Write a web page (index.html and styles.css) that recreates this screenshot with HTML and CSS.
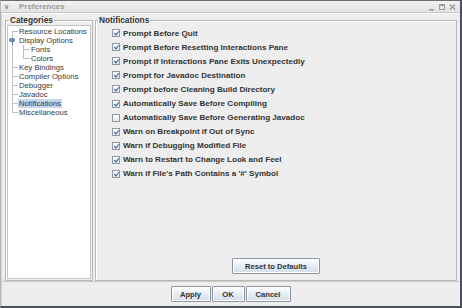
FILE: index.html
```html
<!DOCTYPE html>
<html>
<head>
<meta charset="utf-8">
<link rel="stylesheet" href="styles.css">
</head>
<body>
<div class="window">
  <div class="titlebar">
    <span class="tmenu">&#x2228;</span>
    <span class="ttitle">Preferences</span>
    <span class="tctrls">
      <svg width="30" height="8" viewBox="0 0 30 8">
        <rect x="1" y="6" width="5" height="1.5" fill="#9a9a9a"/>
        <rect x="11.5" y="1.5" width="5" height="5" fill="none" stroke="#9a9a9a" stroke-width="1"/>
        <rect x="11.5" y="1.5" width="5" height="1.5" fill="#9a9a9a"/>
        <path d="M22 1.5 L27 6.5 M27 1.5 L22 6.5" stroke="#9a9a9a" stroke-width="1.4"/>
      </svg>
    </span>
  </div>
  <div class="content">
    <div class="panels">
      <fieldset class="group cats">
        <legend>Categories</legend>
        <div class="tree">
          <div class="row top"><span class="stub"></span>Resource Locations</div>
          <div class="row"><span class="handle"></span>Display Options</div>
          <div class="row sub"><span class="stub"></span>Fonts</div>
          <div class="row sub last"><span class="stub"></span>Colors</div>
          <div class="row"><span class="stub"></span>Key Bindings</div>
          <div class="row"><span class="stub"></span>Compiler Options</div>
          <div class="row"><span class="stub"></span>Debugger</div>
          <div class="row"><span class="stub"></span>Javadoc</div>
          <div class="row"><span class="stub"></span><span class="sel">Notifications</span></div>
          <div class="row end"><span class="stub"></span>Miscellaneous</div>
        </div>
      </fieldset>
      <fieldset class="group notes">
        <legend>Notifications</legend>
        <div class="checks">
          <label class="chk"><span class="box on"></span>Prompt Before Quit</label>
          <label class="chk"><span class="box on"></span>Prompt Before Resetting Interactions Pane</label>
          <label class="chk"><span class="box on"></span>Prompt if Interactions Pane Exits Unexpectedly</label>
          <label class="chk"><span class="box on"></span>Prompt for Javadoc Destination</label>
          <label class="chk"><span class="box on"></span>Prompt before Cleaning Build Directory</label>
          <label class="chk"><span class="box on"></span>Automatically Save Before Compiling</label>
          <label class="chk"><span class="box"></span>Automatically Save Before Generating Javadoc</label>
          <label class="chk"><span class="box on"></span>Warn on Breakpoint if Out of Sync</label>
          <label class="chk"><span class="box on"></span>Warn if Debugging Modified File</label>
          <label class="chk"><span class="box on"></span>Warn to Restart to Change Look and Feel</label>
          <label class="chk"><span class="box on"></span>Warn if File's Path Contains a '#' Symbol</label>
        </div>
        <div class="resetrow"><button class="btn reset">Reset to Defaults</button></div>
      </fieldset>
    </div>
    <div class="buttons">
      <button class="btn apply">Apply</button>
      <button class="btn ok">OK</button>
      <button class="btn cancel">Cancel</button>
    </div>
  </div>
</div>
</body>
</html>
```
FILE: styles.css
```css
* { box-sizing: border-box; }
html, body { margin: 0; padding: 0; background: #eeeeee; }
body { width: 462px; height: 308px; overflow: hidden; font-family: "Liberation Sans", Arial, sans-serif; }
.window {
  width: 462px; height: 308px;
  display: flex; flex-direction: column;
  border-top: 1px solid #6b6b6b;
  border-right: 2px solid #4a4f5a;
  border-bottom: 2px solid #4a4f5a;
  border-left: 1px solid #b5b5b5;
  background: #eeeeee;
}
.titlebar {
  height: 12px;
  display: flex; align-items: center;
  background: linear-gradient(#f2f2f2, #e2e2e2);
  border-bottom: 1px solid #c8c8c8;
  color: #9a9a9a;
  font-size: 7.8px; font-weight: bold;
  padding: 0 2px 0 3px;
}
.tmenu { width: 15px; font-size: 7px; color: #8a8a8a; }
.ttitle { flex: 1; letter-spacing: 0.1px; }
.tctrls { display: flex; align-items: center; }
.content {
  flex: 1;
  display: flex; flex-direction: column;
  border-left: 1px solid #d4d4d4;
  border-top: 1px solid #fafafa;
}
.panels {
  flex: 1;
  display: flex;
  padding: 2px 3px 0 3px;
  gap: 2px;
}
.group {
  margin: 0;
  border: 1px solid #b8b8b8;
  box-shadow: inset 1px 1px 0 #ffffff;
  padding: 0;
}
.group legend {
  font-weight: bold;
  color: #333333;
  padding: 0 1px;
  margin-left: 2px;
  font-size: 8.3px;
  line-height: 8px;
}
.cats {
  width: 88px;
  padding: 1px 1px 1px 1px;
  display: flex;
}
.tree {
  flex: 1;
  background: #ffffff;
  border: 1px solid #c4c4c4;
  padding-top: 0.5px;
  color: #3a3a3a;
}
.row {
  position: relative;
  height: 9.1px;
  line-height: 9px;
  padding-left: 11px;
  font-size: 7.7px;
  white-space: nowrap;
}
.row::before {
  content: ""; position: absolute; left: 4px; top: 0; bottom: 0;
  border-left: 1px solid #c0c0c0;
}
.row.end::before { bottom: 4px; }
.row.top::before { top: 4px; }
.stub {
  position: absolute; left: 4px; top: 4px; width: 6px;
  border-top: 1px solid #c0c0c0;
}
.row.sub { padding-left: 23px; }
.row.sub .stub { left: 15px; width: 7px; }
.row.sub::after {
  content: ""; position: absolute; left: 15px; top: 0; bottom: 0;
  border-left: 1px solid #c0c0c0;
}
.row.sub.last::after { bottom: 4px; }
.handle {
  position: absolute; left: 1px; top: 2px; width: 6px; height: 4px;
  border-radius: 50%;
  background: #7d9cc5;
  border: 1px solid #5679aa;
}
.handle::after {
  content: ""; position: absolute; left: 1.5px; top: 3px; width: 1px; height: 4px;
  background: #5679aa;
}
.sel { background: #c7d6ea; padding: 0 1px; margin-left: -1px; }
.notes {
  flex: 1;
  display: flex; flex-direction: column;
  padding: 0 0 6px 0;
}
.checks {
  display: flex; flex-direction: column;
  padding: 2px 0 0 16px;
}
.chk {
  display: flex; align-items: center;
  height: 14.1px;
  font-weight: bold;
  color: #333333;
  font-size: 8.1px;
  white-space: nowrap;
}
.box {
  width: 8px; height: 8px;
  margin-right: 3px;
  border: 1px solid #8d97a6;
  background: linear-gradient(#ffffff, #dfe6f0);
  position: relative;
}
.box.on::after {
  content: ""; position: absolute;
  left: 1.5px; top: 0px;
  width: 2px; height: 4px;
  border-right: 1.4px solid #3f5d8a;
  border-bottom: 1.4px solid #3f5d8a;
  transform: rotate(40deg);
}
.resetrow {
  margin-top: auto;
  display: flex; justify-content: center;
}
.btn {
  font-family: "Liberation Sans", Arial, sans-serif;
  font-weight: bold;
  font-size: 7.6px;
  color: #333333;
  height: 16px;
  padding: 0;
  border: 1px solid #8c95a3;
  background: linear-gradient(#ffffff 0%, #e8eef6 45%, #d3deeb 100%);
  border-radius: 1px;
  box-shadow: inset 0 0 0 1px #ffffff;
}
.reset { width: 88px; }
.buttons {
  height: 25px;
  display: flex; justify-content: center; align-items: center;
  gap: 1px;
  padding-right: 1px;
  border-top: 1px solid #c8c8c8;
}
.apply { width: 40px; }
.ok { width: 33px; }
.cancel { width: 45px; }
```
